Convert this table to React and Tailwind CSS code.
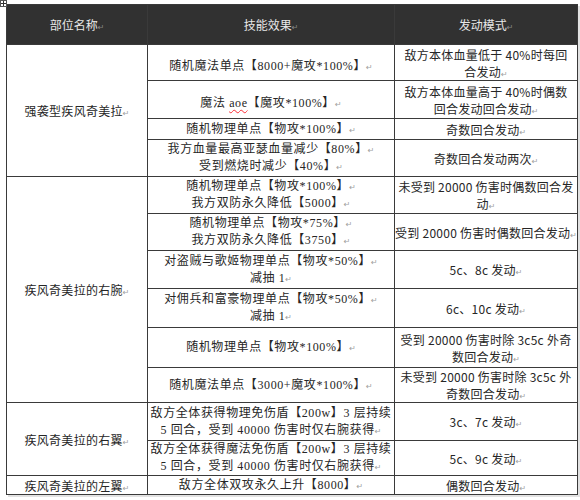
import React from "react";

const M = () => <span className="text-[#a0a0a0] text-[8px] leading-none tracking-normal font-['DejaVu_Sans',sans-serif]">↵</span>;

const serif = "font-['Liberation_Serif','Noto_Sans_CJK_SC',serif]";
const sans = "font-['Noto_Sans_CJK_SC','Liberation_Sans',sans-serif]";

const td = "border border-[#3a3a3a] text-center align-middle p-0 text-[12px] leading-[17px] text-[#262626]";
const line = "whitespace-nowrap h-[17px] leading-[17px] overflow-visible";

const rows = [
  { h: 36, c2: [<>随机魔法单点【8000+魔攻*100%】<M /></>], c3: ["敌方本体血量低于 40%时每回", <>合发动<M /></>], c2pt: true },
  { h: 38, c2: [<>魔法 <span className="underline decoration-wavy decoration-red-500 decoration-1 underline-offset-2">aoe</span>【魔攻*100%】<M /></>], c3: ["敌方本体血量高于 40%时偶数", <>回合发动回合发动<M /></>], c2pt: true },
  { h: 21, c2: [<>随机物理单点【物攻*100%】<M /></>], c3: [<>奇数回合发动<M /></>] },
  { h: 37, c2: [<>我方血量最高亚瑟血量减少【80%】<M /></>, <>受到燃烧时减少【40%】<M /></>], c3: [<>奇数回合发动两次<M /></>] },
  { h: 37, c2: [<>随机物理单点【物攻*100%】<M /></>, <>我方双防永久降低【5000】<M /></>], c3: ["未受到 20000 伤害时偶数回合发", <>动<M /></>] },
  { h: 37, c2: [<>随机物理单点【物攻*75%】<M /></>, <>我方双防永久降低【3750】<M /></>], c3: [<>受到 20000 伤害时偶数回合发动<M /></>] },
  { h: 38, c2: [<>对盗贼与歌姬物理单点【物攻*50%】<M /></>, <>减抽 1<M /></>], c3: [<>5c、8c 发动<M /></>] },
  { h: 39, c2: [<>对佣兵和富豪物理单点【物攻*50%】<M /></>, <>减抽 1<M /></>], c3: [<>6c、10c 发动<M /></>] },
  { h: 40, c2: [<>随机物理单点【物攻*100%】<M /></>], c3: ["受到 20000 伤害时除 3c5c 外奇", <>数回合发动<M /></>] },
  { h: 35, c2: [<>随机魔法单点【3000+魔攻*100%】<M /></>], c3: ["未受到 20000 伤害时除 3c5c 外", <>奇数回合发动<M /></>] },
  { h: 38, c2: ["敌方全体获得物理免伤盾【200w】3 层持续", <>5 回合，受到 40000 伤害时仅右腕获得<M /></>], c3: [<>3c、7c 发动<M /></>] },
  { h: 35, c2: ["敌方全体获得魔法免伤盾【200w】3 层持续", <>5 回合，受到 40000 伤害时仅右腕获得<M /></>], c3: [<>5c、9c 发动<M /></>] },
  { h: 19, c2: [<>敌方全体双攻永久上升【8000】<M /></>], c3: [<>偶数回合发动<M /></>] },
];

const groups = {
  0: { span: 4, label: "强袭型疾风奇美拉" },
  4: { span: 6, label: "疾风奇美拉的右腕" },
  10: { span: 2, label: "疾风奇美拉的右翼" },
  12: { span: 1, label: "疾风奇美拉的左翼" },
};

export default function App() {
  return (
    <div className="relative w-[580px] h-[500px] bg-white pt-[4px] pl-[6px] overflow-hidden">
      <div className="absolute left-0 top-0 w-[7px] h-[7px] border border-[#555] bg-white flex items-center justify-center">
        <svg width="5" height="5" viewBox="0 0 5 5"><path d="M2.5 0V5M0 2.5H5" stroke="#333" strokeWidth="1" /></svg>
      </div>
      <table className={`table-fixed border-collapse w-[571px] shadow-[2px_2px_0_#e2e2e2] ${sans}`}>
        <colgroup>
          <col className="w-[141px]" />
          <col className="w-[247px]" />
          <col className="w-[183px]" />
        </colgroup>
        <thead>
          <tr className="h-[40px] bg-[#313131]">
            {["部位名称", "技能效果", "发动模式"].map((t) => (
              <th key={t} className="border border-[#3a3a3a] font-normal text-[12px] leading-[17px] text-[#e8e8e8] align-middle p-0">
                <div className="h-[17px]">{t}<span className="text-[#888] text-[8px] leading-none font-['DejaVu_Sans',sans-serif]">↵</span></div>
              </th>
            ))}
          </tr>
        </thead>
        <tbody>
          {rows.map((r, i) => (
            <tr key={i} style={{ height: r.h }}>
              {groups[i] && (
                <td rowSpan={groups[i].span} className={`${td} tracking-[0.3px]`}>
                  <div className={line}>{groups[i].label}<M /></div>
                </td>
              )}
              <td className={`${td} ${serif} tracking-[0.6px]`}>
                <div className={r.c2pt ? "pt-[8px]" : ""}>
                  {r.c2.map((l, j) => (
                    <div key={j} className={line}>{l}</div>
                  ))}
                </div>
              </td>
              <td className={`${td} tracking-[0.25px]`}>
                {r.c3.map((l, j) => (
                  <div key={j} className={line}>{l}</div>
                ))}
              </td>
            </tr>
          ))}
        </tbody>
      </table>
    </div>
  );
}
